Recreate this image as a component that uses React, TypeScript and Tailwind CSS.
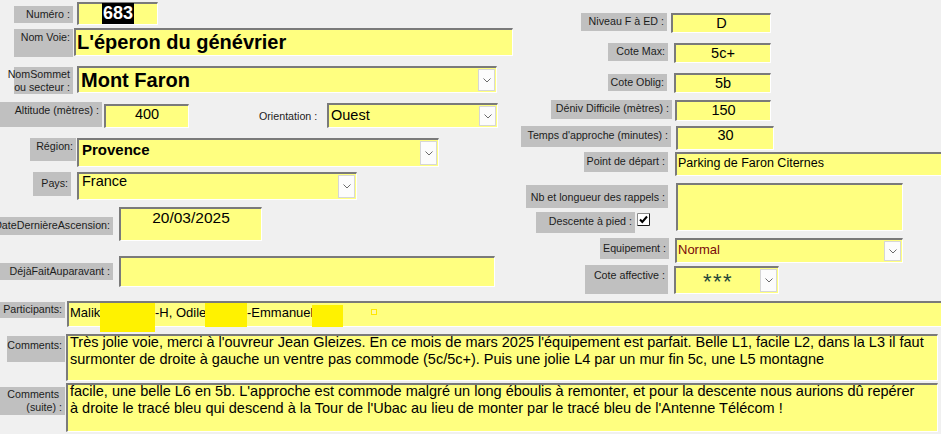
import type { ReactNode } from 'react';

// Access-style form: grey caption labels and sunken yellow fields

function Label({ children, className = '', clip = true }: { children: ReactNode; className?: string; clip?: boolean }) {
  return (
    <div
      className={`flex shrink-0 items-start justify-end whitespace-nowrap bg-[#c0c0c0] pr-[3px] text-right text-[10.7px] leading-[13px] text-[#1c1c1c] ${clip ? 'overflow-hidden' : 'overflow-visible'} ${className}`}
    >
      <span className="shrink-0">{children}</span>
    </div>
  );
}

function Field({
  children,
  className = '',
  text = 'text-[14.5px] leading-[17px]',
}: {
  children?: ReactNode;
  className?: string;
  text?: string;
}) {
  return (
    <div
      className={`relative shrink-0 border-t-2 border-l-2 border-r border-b border-t-[#7a7a7a] border-l-[#7a7a7a] border-r-white border-b-white bg-[#ffff80] text-black ${text} ${className}`}
    >
      {children}
    </div>
  );
}

function DropButton() {
  return (
    <div className="ml-auto mr-px mt-px flex h-[calc(100%-2px)] w-[17px] shrink-0 items-center justify-center border border-[#d6d6d6] bg-[#fcfcfc]">
      <svg width="8" height="5" viewBox="0 0 8 5">
        <polyline points="0.5,0.5 4,4 7.5,0.5" fill="none" stroke="#6b6b6b" strokeWidth="1" />
      </svg>
    </div>
  );
}

function Combo({ children, className = '' }: { children?: ReactNode; className?: string }) {
  return (
    <Field className={`flex items-stretch ${className}`}>
      <div className="min-w-0 flex-1 overflow-hidden whitespace-nowrap">{children}</div>
      <DropButton />
    </Field>
  );
}

function CheckBox() {
  return (
    <svg width="13" height="13" viewBox="0 0 13 13" className="shrink-0">
      <rect x="0" y="0" width="13" height="13" fill="#ffffff" />
      <path d="M0.5 12.5 V0.5 H12.5" fill="none" stroke="#8a8a8a" />
      <path d="M0.5 12.5 H12.5 V0.5" fill="none" stroke="#1a1a1a" />
      <path d="M3 6.5 L5.3 9 L10 3.5" fill="none" stroke="#000" strokeWidth="2" />
    </svg>
  );
}

export default function App() {
  return (
    <div className="h-[434px] w-[941px] overflow-hidden bg-[#f0f0f0] font-['Liberation_Sans',Arial,sans-serif]">
      <div className="flex items-start">
        {/* left column */}
        <div className="w-[520px] shrink-0 pt-[2px]">
          <div className="flex items-start">
            <Label className="ml-[14px] mt-[4px] h-[17px] w-[59px] pt-[2px]">Numéro :</Label>
            <Field className="ml-[4px] flex h-[23px] w-[81px] justify-center">
              <span className="-mt-px bg-black px-px text-[18px] font-bold leading-[20px] text-white">683</span>
            </Field>
          </div>

          <div className="mt-[3px] flex items-start">
            <Label className="ml-[14px] mt-px h-[28px] w-[59px] pt-[2px]">Nom Voie:</Label>
            <Field className="ml-px h-[28px] w-[439px] pl-px font-bold" text="text-[20px] leading-[24px]">
              L'éperon du génévrier
            </Field>
          </div>

          <div className="mt-[9px] flex items-start">
            <Label clip={false} className="ml-[14px] mt-px h-[27px] w-[59px] pt-[1px]">
              NomSommet
              <br />
              ou secteur :
            </Label>
            <Combo className="ml-[4px] h-[27px] w-[420px]">
              <div className="pl-[2px] pt-px text-[20px] font-bold leading-[22px]">Mont Faron</div>
            </Combo>
          </div>

          <div className="mt-[8px] flex items-start">
            <Label className="h-[25px] w-[102px] pt-[2px]">Altitude (mètres) :</Label>
            <Field className="ml-[2px] mt-[2px] h-[24px] w-[85px] text-center">400</Field>
            <div className="ml-[70px] mt-[8px] w-[64px] shrink-0 whitespace-nowrap text-[10.7px] leading-[13px] text-[#1c1c1c]">
              Orientation :
            </div>
            <Combo className="ml-[4px] mt-px h-[25px] w-[171px]">
              <div className="pl-[2px] pt-[2px]">Ouest</div>
            </Combo>
          </div>

          <div className="mt-[10px] flex items-start">
            <Label className="ml-[30px] h-[23px] w-[46px] pt-[2px]">Région:</Label>
            <Combo className="ml-px h-[29px] w-[362px]">
              <div className="pl-[3px] pt-px text-[15px] font-bold leading-[18px]">Provence</div>
            </Combo>
          </div>

          <div className="mt-[5px] flex items-start">
            <Label className="ml-[33px] h-[24px] w-[38px] pt-[5px]">Pays:</Label>
            <Combo className="ml-[6px] h-[28px] w-[280px]">
              <div className="pl-[3px] leading-[15px]">France</div>
            </Combo>
          </div>

          <div className="mt-[7px] flex items-start">
            <Label className="mt-[10px] h-[18px] w-[113px] pt-[2px]">DateDernièreAscension:</Label>
            <Field className="ml-[6px] h-[34px] w-[143px] text-center" text="text-[15.5px] leading-[18px]">
              20/03/2025
            </Field>
          </div>

          <div className="mt-[15px] flex items-start">
            <Label className="mt-[7px] h-[17px] w-[113px] pt-[2px]">DéjàFaitAuparavant :</Label>
            <Field className="ml-[6px] h-[31px] w-[376px]" />
          </div>
        </div>

        {/* right column */}
        <div className="flex-1 pt-[12px]">
          <div className="flex items-start">
            <Label className="ml-[61px] mt-px h-[18px] w-[86px] pt-[2px]">Niveau F à ED :</Label>
            <Field className="ml-[4px] mt-px h-[20px] w-[100px] text-center">D</Field>
          </div>

          <div className="mt-[10px] flex items-start">
            <Label className="ml-[88px] h-[18px] w-[60px] pt-[2px]">Cote Max:</Label>
            <Field className="ml-[6px] h-[20px] w-[97px] text-center">5c+</Field>
          </div>

          <div className="mt-[10px] flex items-start">
            <Label className="ml-[88px] mt-px h-[17px] w-[59px] pt-[2px]">Cote Oblig:</Label>
            <Field className="ml-[7px] h-[20px] w-[97px] text-center">5b</Field>
          </div>

          <div className="mt-[7px] flex items-start">
            <Label className="ml-[31px] h-[19px] w-[121px] pt-[2px]">Déniv Difficile (mètres) :</Label>
            <Field className="ml-[3px] h-[21px] w-[96px] text-center">150</Field>
          </div>

          <div className="mt-[5px] flex items-start">
            <Label className="ml-px h-[21px] w-[150px] pt-[3px]">Temps d'approche (minutes) :</Label>
            <Field className="ml-[5px] h-[24px] w-[98px] text-center" text="text-[14.5px] leading-[15px]">
              30
            </Field>
          </div>

          <div className="mt-[2px] flex items-start">
            <Label className="ml-[64px] h-[20px] w-[84px] pt-[3px]">Point de départ :</Label>
            <Field className="ml-[7px] h-[24px] w-[300px] pl-px pt-[2px]" text="text-[12.5px] leading-[15px]">
              Parking de Faron Citernes
            </Field>
          </div>

          <div className="mt-[7px] flex items-start">
            <div className="ml-[6px] w-[142px] shrink-0">
              <Label className="mt-[2px] h-[23px] w-[142px] pt-[6px]">Nb et longueur des rappels :</Label>
              <div className="mt-[4px] flex items-start">
                <Label className="ml-[10px] h-[21px] w-[99px] pt-[3px]">Descente à pied :</Label>
                <div className="ml-[2px] mt-px">
                  <CheckBox />
                </div>
              </div>
            </div>
            <Field className="ml-[8px] h-[48px] w-[227px]" />
          </div>

          <div className="mt-[5px] flex items-start">
            <Label className="ml-[80px] h-[21px] w-[69px] pt-[4px]">Equipement :</Label>
            <Combo className="ml-[6px] h-[25px] w-[228px]">
              <div className="pl-px pt-[2px] text-[13px] leading-[16px] text-[#7a0a0a]">Normal</div>
            </Combo>
          </div>

          <div className="mt-[2px] flex items-start">
            <Label className="ml-[65px] h-[29px] w-[83px] pt-[4px]">Cote affective :</Label>
            <Combo className="ml-[6px] mt-px h-[28px] w-[105px]">
              <div className="pl-[27px] pt-[4px] text-[22px] leading-[20px] tracking-[1.5px] text-[#25463a]">***</div>
            </Combo>
          </div>
        </div>
      </div>

      {/* bottom rows */}
      <div className="mt-[6px] flex items-start">
        <Label className="mt-[2px] h-[16px] w-[65px] pt-px">Participants:</Label>
        <Field
          className="ml-[2px] mt-px flex h-[26px] w-[880px] items-start whitespace-nowrap pl-px pt-[2px]"
          text="text-[13px] leading-[16px]"
        >
          <span className="w-[85px] shrink-0">Malik</span>
          <span className="w-[92px] shrink-0">-H, Odile</span>
          <span className="shrink-0">-Emmanuel</span>
          <span className="absolute left-[31px] top-0 h-[29px] w-[55px] bg-[#fff200]" />
          <span className="absolute left-[136px] top-0 h-[24px] w-[42px] bg-[#fff200]" />
          <span className="absolute left-[243px] top-[2px] h-[22px] w-[31px] bg-[#fff200]" />
          <span className="absolute left-[302px] top-[6px] h-[6px] w-[6px] border border-[#ffe900] bg-[#fff7a6]" />
        </Field>
      </div>

      <div className="mt-[7px] flex items-start">
        <Label className="ml-[7px] mt-[2px] h-[26px] w-[58px] pt-[3px]">Comments:</Label>
        <Field className="ml-px h-[47px] w-[872px] whitespace-nowrap pl-[2px]">
          <div className="-mt-[2px]">
            Très jolie voie, merci à l'ouvreur Jean Gleizes. En ce mois de mars 2025 l'équipement est parfait. Belle L1, facile L2, dans la L3 il faut
            <br />
            surmonter de droite à gauche un ventre pas commode (5c/5c+). Puis une jolie L4 par un mur fin 5c, une L5 montagne
          </div>
        </Field>
      </div>

      <div className="mt-[2px] flex items-start">
        <Label className="mt-[4px] h-[28px] w-[65px] pt-px">
          Comments&nbsp;
          <br />
          (suite) :
        </Label>
        <Field className="ml-px h-[49px] w-[872px] whitespace-nowrap pl-[2px]">
          <div className="-mt-[2px]">
            facile, une belle L6 en 5b. L'approche est commode malgré un long éboulis à remonter, et pour la descente nous aurions dû repérer
            <br />
            à droite le tracé bleu qui descend à la Tour de l'Ubac au lieu de monter par le tracé bleu de l'Antenne Télécom !
          </div>
        </Field>
      </div>
    </div>
  );
}
